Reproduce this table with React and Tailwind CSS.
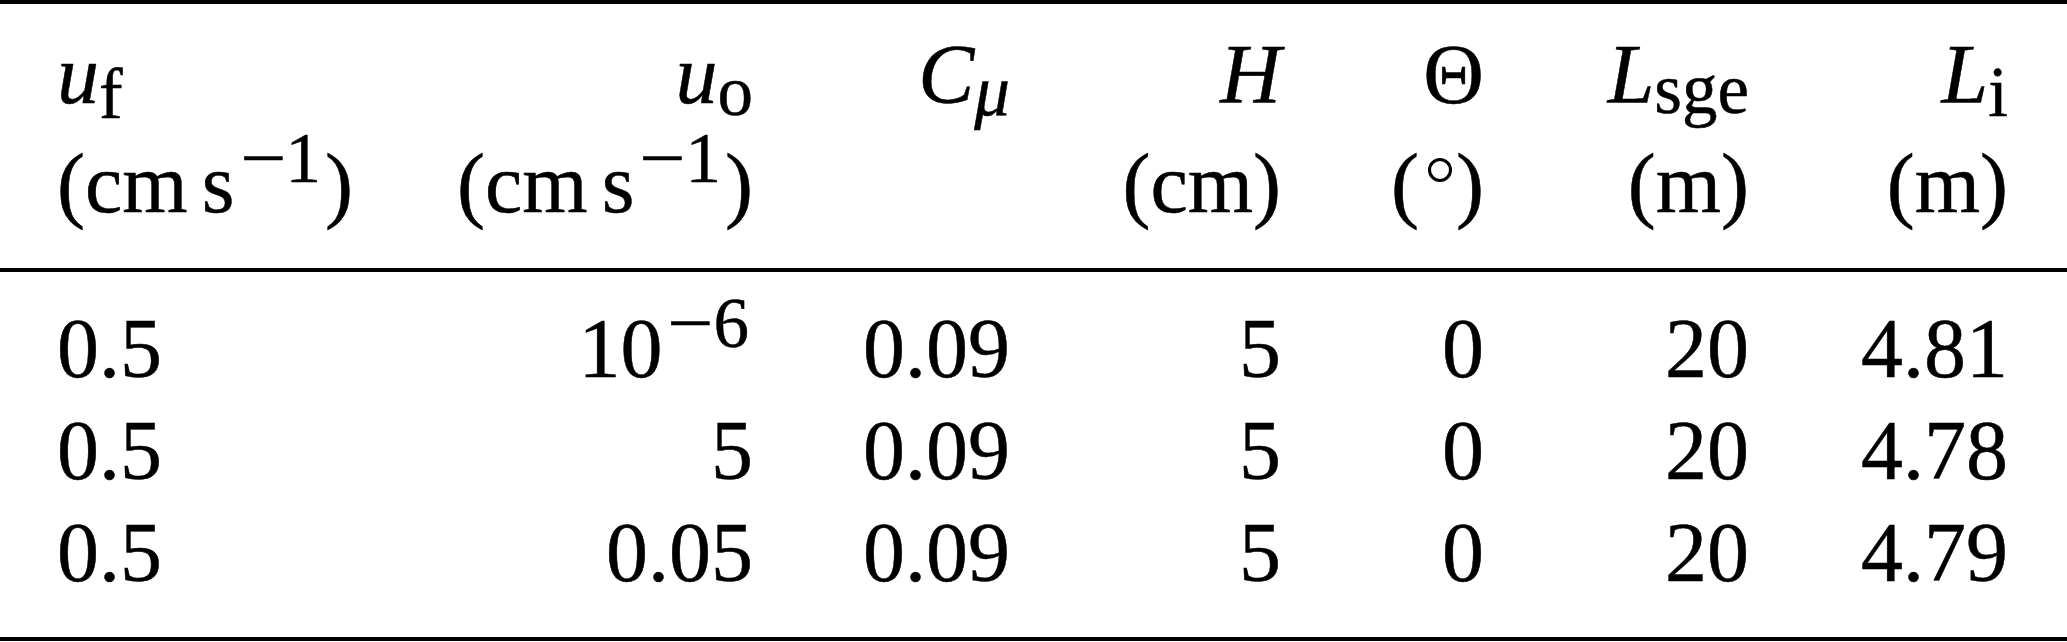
export default function App() {
  const cols = "grid grid-cols-[300px_396px_257px_271px_203px_265px_259px] pl-[57px]";
  const Sub = ({ children, off = "align-[-13px]" }) => (
    <span className={`text-[71px] leading-[0] not-italic ${off}`}>{children}</span>
  );
  const Minus = () => (
    <span className="inline-block scale-x-[1.15] mx-[3px]">−</span>
  );
  const Sup = ({ children }) => (
    <span className="text-[71px] leading-[0] align-[30px] ml-[5px] mr-[4px]">
      <Minus />
      {children}
    </span>
  );
  const Unit = () => (
    <span>
      (cm<span className="ml-[0.17em]">s</span>
      <Sup>1</Sup>)
    </span>
  );
  const rows = [
    ["0.5", <span key="a">10<Sup>6</Sup></span>, "0.09", "5", "0", "20", "4.81"],
    ["0.5", "5", "0.09", "5", "0", "20", "4.78"],
    ["0.5", "0.05", "0.09", "5", "0", "20", "4.79"],
  ];
  return (
    <div
      className="w-[2067px] h-[642px] bg-white text-black text-[84px] overflow-hidden [-webkit-text-stroke:0.5px_black]"
      style={{ fontFamily: '"Liberation Serif", "Times New Roman", serif' }}
    >
      <div className="h-[4px] bg-black" />
      <div className="pt-[20px] pb-[33px]">
        <div className={`${cols} leading-[102px] h-[102px]`}>
          <div>
            <span className="italic">u</span>
            <Sub off="align-[-15px]">f</Sub>
          </div>
          <div className="text-right">
            <span className="italic">u</span>
            <Sub off="align-[-12px]">o</Sub>
          </div>
          <div className="text-right">
            <span className="italic">C</span>
            <Sub off="align-[-12px]"><span className="italic">μ</span></Sub>
          </div>
          <div className="text-right">
            <span className="italic">H</span>
          </div>
          <div className="text-right">Θ</div>
          <div className="text-right">
            <span className="italic">L</span>
            <Sub off="align-[-10px]">sge</Sub>
          </div>
          <div className="text-right">
            <span className="italic">L</span>
            <Sub off="align-[-13px]">i</Sub>
          </div>
        </div>
        <div className={`${cols} leading-[102px] h-[102px] mt-[7px]`}>
          <div><Unit /></div>
          <div className="text-right"><Unit /></div>
          <div className="text-right">&nbsp;</div>
          <div className="text-right">(cm)</div>
          <div className="text-right">
            (<span className="inline-block w-[24px] h-[24px] rounded-full border-[3px] border-black align-[30px] ml-[9px] mr-[4px]" />)
          </div>
          <div className="text-right">(m)</div>
          <div className="text-right">(m)</div>
        </div>
      </div>
      <div className="h-[4px] bg-black" />
      <div className="pt-[26px] pb-[33px]">
        {rows.map((r, i) => (
          <div key={i} className={`${cols} leading-[102px] h-[102px]`}>
            {r.map((c, j) => (
              <div key={j} className={j === 0 ? "" : "text-right"}>
                {c}
              </div>
            ))}
          </div>
        ))}
      </div>
      <div className="h-[4px] bg-black" />
    </div>
  );
}
